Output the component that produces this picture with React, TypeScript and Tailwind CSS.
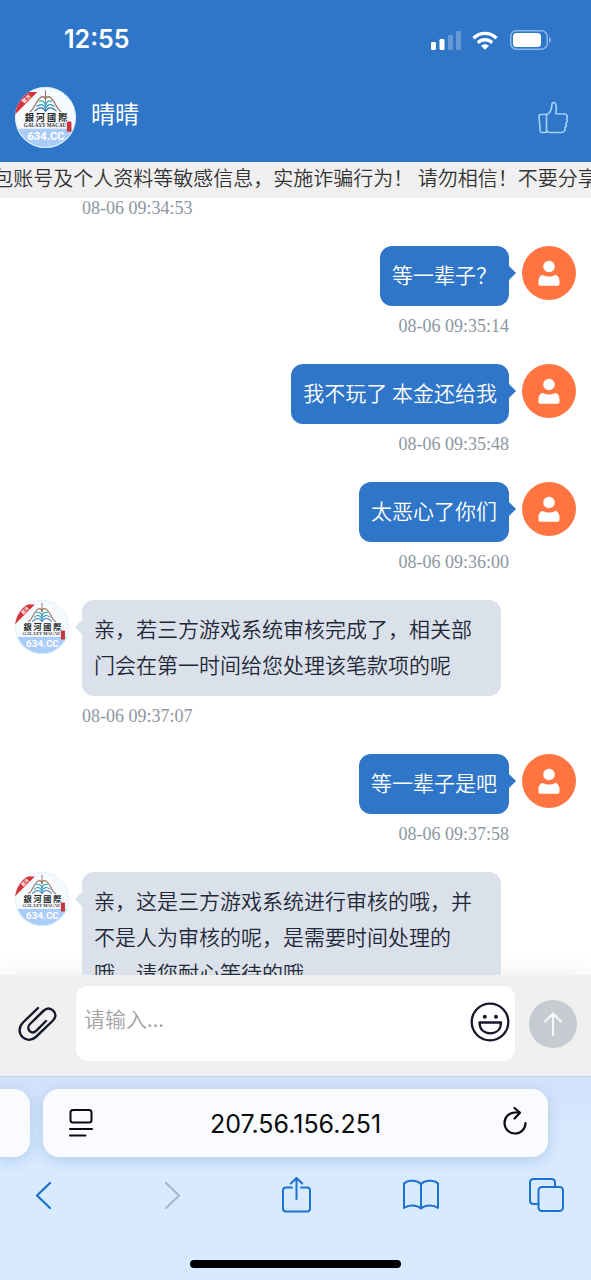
interface Message {
  from: 'agent' | 'me'
  text?: string
  time: string
}

const MESSAGES: Message[] = [
  { from: 'agent', time: '08-06 09:34:53' },
  { from: 'me', text: '等一辈子？', time: '08-06 09:35:14' },
  { from: 'me', text: '我不玩了 本金还给我', time: '08-06 09:35:48' },
  { from: 'me', text: '太恶心了你们', time: '08-06 09:36:00' },
  {
    from: 'agent',
    text: '亲，若三方游戏系统审核完成了，相关部门会在第一时间给您处理该笔款项的呢',
    time: '08-06 09:37:07',
  },
  { from: 'me', text: '等一辈子是吧', time: '08-06 09:37:58' },
  {
    from: 'agent',
    text: '亲，这是三方游戏系统进行审核的哦，并不是人为审核的呢，是需要时间处理的哦，请您耐心等待的哦',
    time: '08-06 09:38:20',
  },
]

function AgentAvatar({ id, className }: { id: string; className: string }) {
  return (
    <svg viewBox="0 0 60 60" className={className} role="img" aria-label="銀河國際">
      <defs>
        <clipPath id={id}>
          <circle cx="30" cy="30" r="30" />
        </clipPath>
      </defs>
      <g clipPath={`url(#${id})`}>
        <rect width="60" height="60" fill="#f6fbff" />
        <rect y="41" width="60" height="19" fill="#a9cdf8" />
        <circle cx="30" cy="30" r="29.5" fill="none" stroke="#dceeff" strokeWidth="1" />
        <path d="M0 27L22 5H8L0 15Z" fill="#d3333a" />
        <text x="0" y="2" transform="translate(11 11.5) rotate(-45)" textAnchor="middle" fontSize="5" fontWeight="700" fill="#fff" className="font-['Noto_Sans_CJK_SC',sans-serif]">
          官方
        </text>
        {/* open book */}
        <g fill="none" strokeLinecap="round">
          <path d="M30 3.5V13" stroke="#8a4b3c" strokeWidth="0.8" />
          <path d="M15 24C20 21 21 11 27 9.5 29 9.5 30 11 30 13 30 11 31 9.5 33 9.5 39 11 40 21 45 24" stroke="#9a6f58" strokeWidth="1.2" />
          <path d="M30 24C28 20 24 19 19.5 23.5M30 24C32 20 36 19 40.5 23.5" stroke="#3f77b5" strokeWidth="1.2" />
          <path d="M30 21C28 17 25 16 21.5 19M30 21C32 17 35 16 38.5 19" stroke="#2f9fc2" strokeWidth="1.2" />
          <path d="M30 18C29 14.5 27 13 24 14M30 18C31 14.5 33 13 36 14" stroke="#2fa7a0" strokeWidth="1.2" />
          <path d="M30 14V24" stroke="#4c86c6" strokeWidth="0.8" />
        </g>
        <text x="30.5" y="33.5" textAnchor="middle" fontSize="9" fontWeight="700" fill="#262626" className="font-['Noto_Sans_CJK_TC',sans-serif]">
          銀 河 國 際
        </text>
        <text x="29.5" y="39" textAnchor="middle" fontSize="5" fontWeight="700" fill="#333" className="font-['Liberation_Serif',serif]">
          GALAXY MACAU
        </text>
        <rect x="51" y="34" width="4.5" height="10" rx="1" fill="#c9343a" />
        <text x="30.5" y="52.5" textAnchor="middle" fontSize="11" fontWeight="700" fill="#fff" className="font-[Roboto,sans-serif]">
          634.CC
        </text>
      </g>
    </svg>
  )
}

function UserAvatar() {
  return (
    <svg viewBox="0 0 54 54" className="size-[54px] shrink-0" aria-hidden="true">
      <circle cx="27" cy="27" r="27" fill="#ff7440" />
      <circle cx="27" cy="20.5" r="5.8" fill="#fff" />
      <path d="M16.5 38V35.5C16.5 31.5 18.5 29 21 29 24.5 31 29.5 31 33 29 35.5 29 37.5 31.5 37.5 35.5V38Q37.5 39.8 35.7 39.8H18.3Q16.5 39.8 16.5 38Z" fill="#fff" />
    </svg>
  )
}

function StatusBar() {
  return (
    <div className="flex h-20 items-center justify-between pr-10 pl-16">
      <span className="font-[Inter,sans-serif] text-[25px] font-semibold">12:55</span>
      <div className="flex items-center">
        <svg viewBox="0 0 30 19" className="mr-[11px] h-[19px] w-[30px]" fill="#fff">
          <rect x="0" y="11" width="5" height="8" rx="1.2" />
          <rect x="8.5" y="8" width="5" height="11" rx="1.2" />
          <rect x="17" y="4" width="5" height="15" rx="1.2" opacity="0.25" />
          <rect x="25" y="0" width="5" height="19" rx="1.2" opacity="0.25" />
        </svg>
        <svg viewBox="0 0 26 19" className="mr-3 h-[19px] w-[26px]" fill="none" stroke="#fff" strokeWidth="3.4">
          <path d="M1.5 7.2C8 0.8 18 0.8 24.5 7.2" />
          <path d="M5.8 11.7C10 7.8 16 7.8 20.2 11.7" />
          <path d="M9 14.8C11.2 12.6 14.8 12.6 17 14.8L13 18.8Z" fill="#fff" stroke="none" />
        </svg>
        <svg viewBox="0 0 41 20" className="h-5 w-[41px]">
          <rect x="0.8" y="0.8" width="36.4" height="18.4" rx="5.5" fill="none" stroke="#8cb9ec" strokeWidth="1.5" />
          <rect x="3" y="3" width="28" height="14" rx="3.5" fill="#fff" />
          <path d="M39 7Q41 8 41 10T39 13Z" fill="#8cb9ec" />
        </svg>
      </div>
    </div>
  )
}

function ChatHeader() {
  return (
    <div className="flex h-[82px] items-center pr-[22px] pb-2 pl-[15px]">
      <AgentAvatar id="header-avatar" className="size-[61px] shrink-0" />
      <h1 className="ml-[15px] flex-1 pb-2 text-[24px]/8">晴晴</h1>
      <button aria-label="点赞">
        <svg viewBox="0 0 32 34" className="h-[34px] w-8" fill="none" stroke="#a3d2fb" strokeWidth="1.6" strokeLinejoin="round" strokeLinecap="round">
          <path d="M9.5 14.5H3.5Q2 14.5 2 16L3.2 31Q3.4 32.5 4.8 32.5H9.5Z" />
          <path d="M9.5 14.5C13 13.5 14.6 9.5 14.8 5 14.9 1.8 18.4 1.6 19 5 19.6 8 19.5 11 18.8 13.8L27.5 14C30.3 14.2 31 16.5 29.6 18.8 30.8 20.2 30.3 22.2 28.8 23.4 29.8 25 29.2 26.6 28 27.4 28.5 30.5 27.2 32.5 24.5 32.5H13C11.5 32.5 10.5 31.8 9.5 30.8" />
        </svg>
      </button>
    </div>
  )
}

function MessageRow({ message, index }: { message: Message; index: number }) {
  const { from, text, time } = message

  if (from === 'me') {
    return (
      <li className="flex justify-end gap-[13px]">
        <div className="flex flex-col items-end">
          <div className="relative rounded-xl bg-[#3076c8] px-3 pt-2.5 pb-3.5 text-[21px]/9 font-[350] text-white">
            {text}
            <span className="absolute top-5 left-full border-y-7 border-l-7 border-y-transparent border-l-[#3076c8]" />
          </div>
          <time className="mt-2.5 font-['Liberation_Serif',serif] text-lg/5 text-[#8c96a3]">{time}</time>
        </div>
        <UserAvatar />
      </li>
    )
  }

  return (
    <li className="flex gap-[13px] pr-[75px]">
      {text ? (
        <AgentAvatar id={`avatar-${index}`} className="size-[54px] shrink-0" />
      ) : (
        <div className="w-[54px] shrink-0" />
      )}
      <div className="flex flex-col">
        {text && (
          <div className="relative mb-2.5 rounded-xl bg-[#dae1ea] px-3 pt-2.5 pb-3.5 text-[21px]/9 font-[350] text-[#1f2836]">
            {text}
            <span className="absolute top-5 right-full border-y-7 border-r-7 border-y-transparent border-r-[#dae1ea]" />
          </div>
        )}
        <time className="font-['Liberation_Serif',serif] text-lg/5 text-[#8c96a3]">{time}</time>
      </div>
    </li>
  )
}

function Composer() {
  return (
    <form className="flex items-center border-b border-[#c3cfde] bg-[#f0f0f0] pt-[11px] pr-3.5 pb-[15px] pl-[18px]">
      <button type="button" aria-label="附件">
        <svg viewBox="0 0 40 40" className="size-10" fill="none" stroke="#15172b" strokeWidth="2.4" strokeLinecap="round" strokeLinejoin="round">
          <path d="M20 4L5 18.5C0.5 23 0.5 29.5 4.6 33.2 8.5 36.8 13.8 36.7 17.8 33L34.5 17C38.2 13.5 38.2 9.5 35.2 6.7 32.3 4 28.5 4 25.3 7L12 20C9.8 22.2 9.8 25.2 11.7 27.1 13.6 28.9 16.3 28.7 18.4 26.7L28 17" />
        </svg>
      </button>
      <div className="mr-3.5 ml-[18px] flex h-[75px] min-w-0 flex-1 items-center rounded-xl bg-white pr-[5px] pb-1 pl-2">
        <textarea
          rows={1}
          aria-label="请输入"
          placeholder="请输入..."
          className="h-11 min-w-0 flex-1 resize-none overflow-hidden text-[21px]/9 font-[350] outline-none placeholder:text-[#a3a3a3]"
        />
        <button type="button" aria-label="表情">
          <svg viewBox="0 0 40 40" className="size-10" fill="none" stroke="#15172b" strokeWidth="2.3">
            <circle cx="20" cy="20" r="18.3" />
            <circle cx="14.8" cy="14.8" r="2" fill="#15172b" stroke="none" />
            <circle cx="26" cy="14.8" r="2" fill="#15172b" stroke="none" />
            <path d="M9.5 20.5H31C31 27.5 26.5 31.3 20.3 31.3S9.5 27.5 9.5 20.5Z" strokeLinejoin="round" />
          </svg>
        </button>
      </div>
      <button type="submit" aria-label="发送" className="flex size-12 items-center justify-center rounded-full bg-[#c6cad1]">
        <svg viewBox="0 0 24 24" className="size-6" fill="none" stroke="#f4f6f9" strokeWidth="2.2" strokeLinecap="round" strokeLinejoin="round">
          <path d="M12 23.5V1.5M4 9.5L12 1.5L20 9.5" />
        </svg>
      </button>
    </form>
  )
}

function BrowserBar() {
  return (
    <div className="bg-[#d7eaff] bg-linear-to-b from-[#d1e2fb] to-[#d7eaff] to-30% pt-3 pb-3">
      <div className="flex h-17 gap-[13px] pr-[43px]">
        <div className="w-[30px] shrink-0 rounded-r-2xl bg-[#f9fbff] shadow-[0_3px_14px_rgba(70,110,160,0.25)]" />
        <div className="flex flex-1 items-center justify-between rounded-2xl bg-[#f9fbff] px-5 shadow-[0_3px_14px_rgba(70,110,160,0.25)]">
          <button aria-label="页面菜单">
            <svg viewBox="0 0 36 36" className="size-9" fill="none" stroke="#0b0b0d" strokeWidth="2" strokeLinecap="round">
              <rect x="7.5" y="5" width="21" height="12.5" rx="2.5" />
              <path d="M7 24H29M7 30.5H22.5" />
            </svg>
          </button>
          <span className="pt-1 font-[Inter,sans-serif] text-[25px] text-[#0b0b0d]">207.56.156.251</span>
          <button aria-label="重新加载">
            <svg viewBox="0 0 36 36" className="size-9" fill="none" stroke="#0b0b0d" strokeWidth="2.2" strokeLinecap="round" strokeLinejoin="round">
              <path d="M33.5 18A10.5 10.5 0 1 1 23 7.5H27.5" />
              <path d="M22.5 3L28 7.8L22.5 13.5" />
            </svg>
          </button>
        </div>
      </div>

      <nav className="flex justify-between px-[27px] pt-5 text-[#1b73cc]">
        <button aria-label="后退">
          <svg viewBox="0 0 36 36" className="size-9" fill="none" stroke="currentColor" strokeWidth="2.3" strokeLinecap="round" strokeLinejoin="round">
            <path d="M23 6L10 18.5L23 31" />
          </svg>
        </button>
        <button aria-label="前进" className="text-[#aab8c9]">
          <svg viewBox="0 0 36 36" className="size-9" fill="none" stroke="currentColor" strokeWidth="2.3" strokeLinecap="round" strokeLinejoin="round">
            <path d="M14 6L27 18.5L14 31" />
          </svg>
        </button>
        <button aria-label="分享">
          <svg viewBox="0 0 36 36" className="size-9" fill="none" stroke="currentColor" strokeWidth="2" strokeLinecap="round" strokeLinejoin="round">
            <path d="M14 10.5H8Q5 10.5 5 13.5V31.5Q5 34.5 8 34.5H29Q32 34.5 32 31.5V13.5Q32 10.5 29 10.5H23" />
            <path d="M18.5 22V1M12.8 6.5L18.5 1L24.2 6.5" />
          </svg>
        </button>
        <button aria-label="书签">
          <svg viewBox="0 0 36 36" className="size-9" fill="none" stroke="currentColor" strokeWidth="2" strokeLinecap="round" strokeLinejoin="round">
            <path d="M18 31.5V7C14 3 5 2.5 1 6.5V31C5.5 27.5 14 27.5 18 31.5C22 27.5 30.5 27.5 35 31V6.5C31 2.5 22 3 18 7" />
          </svg>
        </button>
        <button aria-label="标签页">
          <svg viewBox="0 0 36 36" className="size-9" fill="none" stroke="currentColor" strokeWidth="2" strokeLinecap="round" strokeLinejoin="round">
            <rect x="10.5" y="10" width="24.5" height="24" rx="3.5" />
            <path d="M10.5 27H5.5Q2 27 2 23.5V5.5Q2 2 5.5 2H23.5Q27 2 27 5.5V10" />
          </svg>
        </button>
      </nav>

      <div className="mx-auto mt-[47px] h-2 w-[211px] rounded-full bg-black" />
    </div>
  )
}

export default function App() {
  return (
    <div className="flex h-screen flex-col overflow-hidden bg-white font-['Noto_Sans_CJK_SC',sans-serif]">
      <header className="shrink-0 bg-[#3076c8] text-white">
        <StatusBar />
        <ChatHeader />
      </header>

      {/* Scrolling notice */}
      <div className="flex h-9 shrink-0 justify-center overflow-hidden bg-[#f0f0f0] text-xl/8 font-[350] whitespace-nowrap text-[#333]">
        <p>包账号及个人资料等敏感信息，实施诈骗行为！ 请勿相信！不要分享</p>
      </div>

      <main className="min-h-0 flex-1 overflow-hidden">
        <ul className="flex flex-col gap-7 px-[15px]">
          {MESSAGES.map((message, i) => (
            <MessageRow key={message.time} message={message} index={i} />
          ))}
        </ul>
      </main>

      <footer className="shrink-0 shadow-[0_-4px_24px_rgba(0,0,0,0.06)]">
        <Composer />
        <BrowserBar />
      </footer>
    </div>
  )
}
